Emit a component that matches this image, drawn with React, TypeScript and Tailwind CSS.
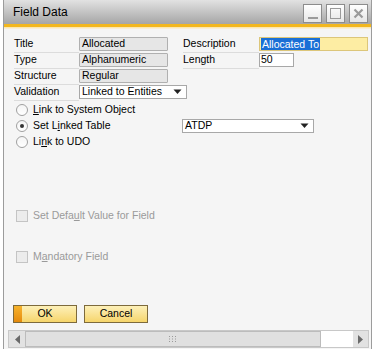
const font = { fontFamily: '"Liberation Sans", Arial, sans-serif' };

function Label({ text, w }: { text: string; w: string }) {
  return (
    <div className={`${w} flex h-[16px] items-center border-b border-[#dcdcdc] pb-px text-[10.5px] text-black`}>
      {text}
    </div>
  );
}

function Field({ text, w }: { text: string; w: string }) {
  return (
    <div className={`${w} flex h-[14px] items-center rounded-[1px] border border-[#b0b0b0] bg-[#e6e6e6] px-[2px] text-[10.5px] text-black`}>
      {text}
    </div>
  );
}

function Arrow() {
  return (
    <svg width="9" height="6" viewBox="0 0 9 6" className="shrink-0">
      <path d="M0.5 0.5h8L4.5 5z" fill="#222" />
    </svg>
  );
}

function Dropdown({ text, w }: { text: string; w: string }) {
  return (
    <div className={`${w} flex h-[14px] items-center justify-between border border-[#a8a8a8] bg-white pr-[4px] pl-[2px] text-[10.5px] text-black`}>
      <span>{text}</span>
      <Arrow />
    </div>
  );
}

function Radio({ checked, children }: { checked?: boolean; children: React.ReactNode }) {
  return (
    <div className="flex h-[16px] items-center text-[10.5px] text-black">
      <span className="ml-[2px] flex size-[12px] items-center justify-center rounded-full border border-[#a0a0a0] bg-gradient-to-b from-[#f4f4f4] to-white">
        {checked && <span className="size-[4px] rounded-full bg-[#333]" />}
      </span>
      <span className="ml-[5px]">{children}</span>
    </div>
  );
}

function Check({ children }: { children: React.ReactNode }) {
  return (
    <div className="flex h-[16px] items-center text-[10.5px] text-[#9a9a9a]">
      <span className="ml-[2px] size-[12px] border border-[#c4c4c4] bg-[#ececec]" />
      <span className="ml-[5px]">{children}</span>
    </div>
  );
}

function WinButton({ children }: { children: React.ReactNode }) {
  return (
    <div className="flex size-[19px] items-center justify-center border border-[#8c8c8c] bg-gradient-to-b from-white to-[#e6e6e6]">
      {children}
    </div>
  );
}

export default function App() {
  return (
    <div className="h-[349px] w-[375px] overflow-hidden bg-white" style={font}>
      <div className="ml-[3px] flex h-[360px] w-[369px] flex-col border-x border-[#9c9c9c] bg-[#f5f5f5]">
        <div className="flex h-[24px] shrink-0 items-center justify-between bg-gradient-to-b from-[#e2e2e2] to-[#a6a6a6] pr-[3px] pl-[9px]">
          <span className="text-[12px] text-black">Field Data</span>
          <div className="mt-[3px] flex gap-[4px]">
            <WinButton>
              <span className="mt-[9px] h-[2px] w-[10px] bg-[#9a9a9a]" />
            </WinButton>
            <WinButton>
              <span className="size-[11px] border-[1.5px] border-[#9a9a9a]" />
            </WinButton>
            <WinButton>
              <svg width="11" height="11" viewBox="0 0 11 11">
                <path d="M1.5 1.5l8 8M9.5 1.5l-8 8" stroke="#9a9a9a" strokeWidth="2.2" />
              </svg>
            </WinButton>
          </div>
        </div>
        <div className="h-[3px] shrink-0 bg-[#f2b71e]" />
        <div className="h-[2px] shrink-0 bg-gradient-to-b from-[#fbe3a0] to-[#f7f2e4]" />

        <div className="flex flex-1 flex-col pt-[8px] pl-[10px]">
          <div className="flex h-[16px] items-start">
            <Label text="Title" w="w-[65px]" />
            <Field text="Allocated" w="w-[89px]" />
            <div className="ml-[15px]">
              <Label text="Description" w="w-[76px]" />
            </div>
            <div className="flex h-[14px] w-[109px] items-center border border-[#dcc67a] bg-[#fdeda3] pl-[1px] text-[10.5px]">
              <span className="bg-[#1a6fd6] px-px leading-[12px] text-white">Allocated To</span>
            </div>
          </div>
          <div className="flex h-[16px] items-start">
            <Label text="Type" w="w-[65px]" />
            <Field text="Alphanumeric" w="w-[89px]" />
            <div className="ml-[15px]">
              <Label text="Length" w="w-[76px]" />
            </div>
            <div className="flex h-[14px] w-[35px] items-center border border-[#a8a8a8] bg-white pl-[1px] text-[10.5px] text-black">
              50
            </div>
          </div>
          <div className="flex h-[16px] items-start">
            <Label text="Structure" w="w-[65px]" />
            <Field text="Regular" w="w-[89px]" />
          </div>
          <div className="flex h-[16px] items-start">
            <Label text="Validation" w="w-[65px]" />
            <Dropdown text="Linked to Entities" w="w-[108px]" />
          </div>

          <div className="mt-[1px] flex flex-col">
            <Radio>
              <u>L</u>ink to System Object
            </Radio>
            <div className="flex items-center">
              <div className="w-[168px]">
                <Radio checked>
                  Set L<u>i</u>nked Table
                </Radio>
              </div>
              <Dropdown text="ATDP" w="w-[132px]" />
            </div>
            <Radio>
              Li<u>n</u>k to UDO
            </Radio>
          </div>

          <div className="mt-[58px]">
            <Check>
              Set Defa<u>u</u>lt Value for Field
            </Check>
          </div>
          <div className="mt-[25px]">
            <Check>
              M<u>a</u>ndatory Field
            </Check>
          </div>

          <div className="mt-[40px] -ml-px flex gap-[7px]">
            <div className="relative flex h-[18px] w-[64px] items-center justify-center overflow-hidden border border-[#7d6a3c] bg-gradient-to-b from-[#fdf0b8] to-[#f6d56a] text-[10.5px] text-black">
              <span className="absolute inset-y-0 left-0 w-[8px] bg-gradient-to-b from-[#f6b32c] to-[#e58a0c]" />
              OK
            </div>
            <div className="flex h-[18px] w-[64px] items-center justify-center border border-[#7d6a3c] bg-gradient-to-b from-[#fdf0b8] to-[#f6d56a] text-[10.5px] text-black">
              Cancel
            </div>
          </div>

          <div className="mt-[7px] -ml-[6px] flex h-[18px] w-[361px] items-stretch border border-[#c8c8c8] bg-white">
            <div className="flex w-[16px] items-center justify-center bg-[#e2e2e2]">
              <svg width="5" height="9" viewBox="0 0 5 9">
                <path d="M5 0v9L0 4.5z" fill="#6a6a6a" />
              </svg>
            </div>
            <div className="flex w-[296px] items-center justify-center border border-[#bcbcbc] bg-[#e0e0e0]">
              <svg width="8" height="6" viewBox="0 0 8 6">
                <g fill="#9a9a9a">
                  <rect x="0" y="0" width="1" height="1" />
                  <rect x="3" y="0" width="1" height="1" />
                  <rect x="6" y="0" width="1" height="1" />
                  <rect x="0" y="2.5" width="1" height="1" />
                  <rect x="3" y="2.5" width="1" height="1" />
                  <rect x="6" y="2.5" width="1" height="1" />
                  <rect x="0" y="5" width="1" height="1" />
                  <rect x="3" y="5" width="1" height="1" />
                  <rect x="6" y="5" width="1" height="1" />
                </g>
              </svg>
            </div>
            <div className="flex-1" />
            <div className="flex w-[15px] items-center justify-center bg-[#e2e2e2]">
              <svg width="5" height="9" viewBox="0 0 5 9">
                <path d="M0 0v9L5 4.5z" fill="#6a6a6a" />
              </svg>
            </div>
          </div>
        </div>
      </div>
    </div>
  );
}
